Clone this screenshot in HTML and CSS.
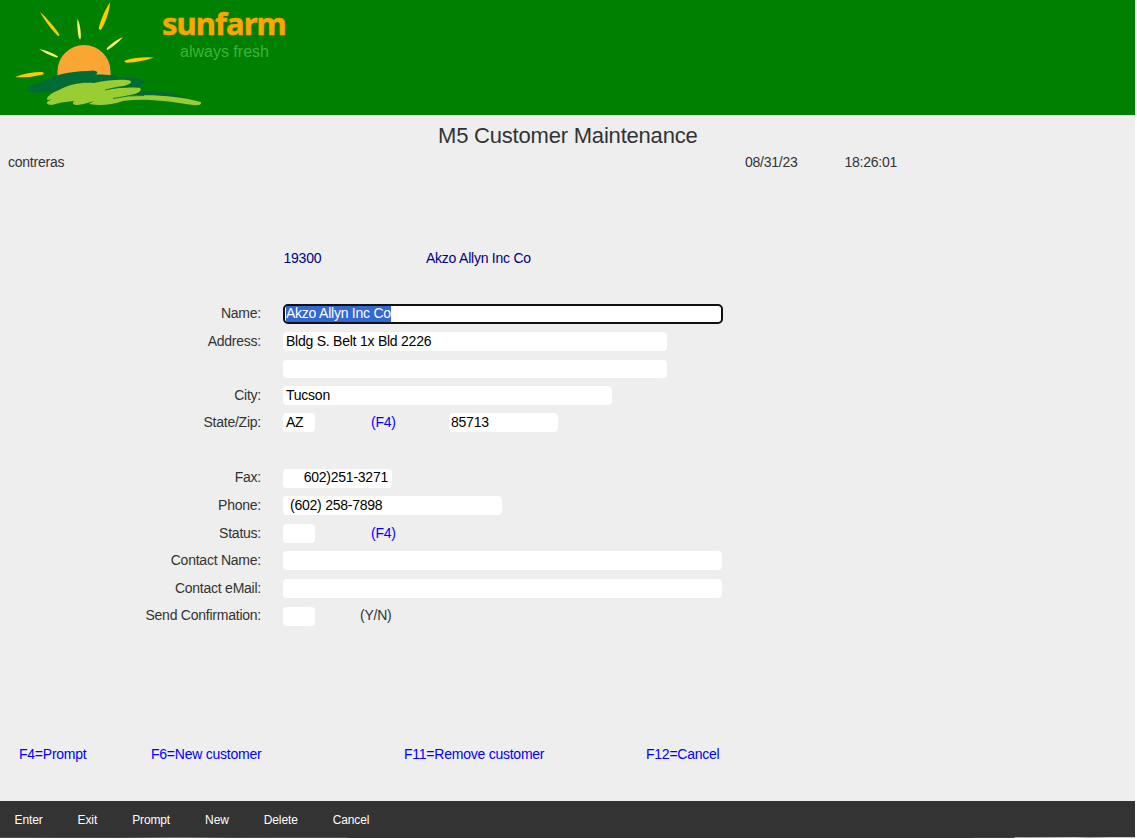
FILE: index.html
```html
<!DOCTYPE html>
<html lang="en">
<head>
<meta charset="utf-8">
<title>M5 Customer Maintenance</title>
<link rel="stylesheet" href="styles.css">
</head>
<body>
<div class="page">
  <header class="banner">
    <svg class="logo" viewBox="0 0 204 115" width="204" height="115" aria-hidden="true">
      <g fill="#ffcc00">
        <path d="M40 12C46 17 57 30 59.500 35Q59 37 57 35C51 29 43 18 40 12Z"/>
        <path d="M110 2.500C110 10 104 27 100.500 30Q98.500 30 99 27C101 19 106 8 110 2.500Z"/>
        <path d="M15 77Q28 72 42 72Q45 73 43 74.500Q30 78 15 77Z"/>
        <path d="M154 57.500Q141 62 127 62.800Q123 62 125 60.500Q138 56.500 154 57.500Z"/>
      </g>
      <g fill="#ffff66">
        <path d="M77.500 19C80 23 81.500 35 80.500 39Q80 40 79 38C77.500 33 77 24 77.500 19Z"/>
        <path d="M39 49Q50 51 58 56.500Q57 58 55 57Q46 54 39 49Z"/>
        <path d="M123 37Q116 45 107.500 50Q106 50 107 48Q114 41 123 37Z"/>
      </g>
      <path fill="#faa632" d="M57.500 78V71.500A26.500 26.500 0 0 1 110.500 71.500V78Z"/>
      <path fill="#006b33" d="M42 82C53 75 70 71.500 87 71Q96 69.500 97 72Q98 73.500 95 74.500C104 74 115 75 120 78Q142 77 145 82Q145 86 137 87L142 91C155 90 172 94 189 97L140 97L50 97L53 91Q38 94 28 92Q25 91 29 88C26 87 34 84 42 82Z"/>
      <path fill="#9acd32" d="M47 99Q48 94 59 90C70 84 81 82 94 83C108 80 123 79 130 80.500Q134 83 124 86L105 90C120 87 137 87 140 88Q143 91 135 94L125 96C153 94 179 96 201 102Q202 106 193 105C166 101 145 98 123 101C112 105 99 106 89 104L94 101Q82 105 76 105Q71 104 74 101Q60 102 52 105Q46 105 47 102L52 99Q47 101 47 99Z"/>
      <path d="M105 90Q118 86 130 86.500M113 98.500Q128 95 144 95.500" stroke="#006b33" stroke-width=".8" fill="none"/>
      <path d="M123 109.500h4M135 109.500h3" stroke="#006b22" stroke-width=".8"/>
    </svg>
    <div class="brand">
      <div class="brand-name">sunfarm</div>
      <div class="tagline">always fresh</div>
    </div>
  </header>
  <main class="screen">
    <h1 class="title">M5 Customer Maintenance</h1>
    <div class="status-line"><span>contreras</span><span>08/31/23</span><span>18:26:01</span></div>
    <div class="record"><span>19300</span><span>Akzo Allyn Inc Co</span></div>
    <div class="form">
      <label class="label">Name:</label>
      <div class="fields"><div class="field w-440 focused"><span class="selection">Akzo Allyn Inc Co</span></div></div>
      <label class="label">Address:</label>
      <div class="fields"><div class="field w-384">Bldg S. Belt 1x Bld 2226</div></div>
      <span></span>
      <div class="fields"><div class="field w-384 short"></div></div>
      <label class="label">City:</label>
      <div class="fields"><div class="field w-329">Tucson</div></div>
      <label class="label">State/Zip:</label>
      <div class="fields"><div class="field w-32">AZ</div><span class="prompt-key">(F4)</span><div class="field w-109 zip">85713</div></div>
      <label class="label raised">Fax:</label>
      <div class="fields"><div class="field w-109 fax raised">602)251-3271</div></div>
      <label class="label">Phone:</label>
      <div class="fields"><div class="field w-219 phone">(602) 258-7898</div></div>
      <label class="label">Status:</label>
      <div class="fields"><div class="field w-32"></div><span class="prompt-key">(F4)</span></div>
      <label class="label">Contact Name:</label>
      <div class="fields"><div class="field w-439"></div></div>
      <label class="label">Contact eMail:</label>
      <div class="fields"><div class="field w-439"></div></div>
      <label class="label raised">Send Confirmation:</label>
      <div class="fields"><div class="field w-32"></div><span class="hint raised">(Y/N)</span></div>
    </div>
    <nav class="keys"><a>F4=Prompt</a><a>F6=New customer</a><a>F11=Remove customer</a><a>F12=Cancel</a></nav>
  </main>
  <footer class="toolbar"><a>Enter</a><a>Exit</a><a>Prompt</a><a>New</a><a>Delete</a><a>Cancel</a></footer>
  <div class="edge"></div>
</div>
</body>
</html>
```
FILE: styles.css
```css
* { box-sizing: border-box; }
body { margin: 0; background: #fff; overflow: hidden; }
.page {
  width: 1135px;
  height: 838px;
  display: flex;
  flex-direction: column;
  background: #eee;
  color: #333;
  font: 14px/18px "Liberation Sans", Arial, sans-serif;
  letter-spacing: -.24px;
}
.banner { height: 115px; flex: none; display: flex; background: #008000; }
.logo { display: block; flex: none; }
.brand { margin-left: -42px; padding-top: 5px; }
.brand-name {
  height: 38px;
  font: 700 31px/37px "Noto Sans", "Open Sans", sans-serif;
  letter-spacing: -.95px;
  -webkit-text-stroke: .5px #ffa500;
  color: #ffa500;
}
.tagline { padding-left: 18px; font-size: 16px; line-height: 18px; letter-spacing: 0; color: #3cb43c; }
.screen { flex: 1; display: flex; flex-direction: column; min-height: 0; }
.title { margin: 7px 0 0; height: 28px; padding-left: 438px; font-size: 22px; line-height: 28px; letter-spacing: -.2px; font-weight: 400; white-space: nowrap; }
.status-line { display: grid; grid-template-columns: 737px 99.5px auto; padding-left: 8px; margin-top: 3px; height: 18px; }
.record { display: grid; grid-template-columns: 142.5px auto; padding-left: 283.5px; margin-top: 78px; height: 18px; color: #000080; }
.form {
  display: grid;
  grid-template-columns: 261px auto;
  grid-template-rows: 28px 28px 26px 27px 56px 27px 28px 27px 28px 28px 20px;
  column-gap: 22px;
  margin-top: 37px;
}
.label { text-align: right; white-space: nowrap; }
.fields { display: flex; align-items: flex-start; white-space: pre; }
.field { flex: none; height: 19px; padding: 0 3px; border-radius: 4px; background: #fff; color: #000; }
.short { height: 18px; }
.raised { line-height: 16px; }
.focused { height: 20px; padding: 0 1px; border: 2px solid #101010; border-radius: 5px; line-height: 15px; }
.selection { display: inline-block; height: 16px; background: #3367d1; color: #fff; }
.w-32 { width: 32px; }
.w-109 { width: 109px; }
.w-219 { width: 219px; }
.w-329 { width: 329px; }
.w-384 { width: 384px; }
.w-439 { width: 439px; }
.w-440 { width: 440px; }
.prompt-key { width: 78px; margin-left: 56px; color: #00f; }
.zip { padding-left: 2px; }
.fax { padding-right: 4px; text-align: right; }
.phone { padding-left: 7px; }
.hint { margin-left: 45px; }
.keys { display: grid; grid-template-columns: 132px 253px 242px auto; padding-left: 19px; margin-top: 118px; color: #00f; }
.toolbar {
  height: 36px;
  flex: none;
  display: flex;
  gap: 35px;
  padding-left: 14.5px;
  background: #333;
  color: #fff;
  font-size: 12px;
  line-height: 38px;
  letter-spacing: -.12px;
}
.edge {
  height: 1px;
  flex: none;
  background: linear-gradient(90deg, #704047 0, #702f40 120px, #b06054 180px, #703550 230px, #704060 347px, #333 348px, #333 973px, #5a304a 974px, #5a304a 1014px, #b5a5ac 1015px, #c98b99 1025px, #aaa 1045px, #ccc 1075px, #d08090 1090px, #ccc 1110px);
}
```
